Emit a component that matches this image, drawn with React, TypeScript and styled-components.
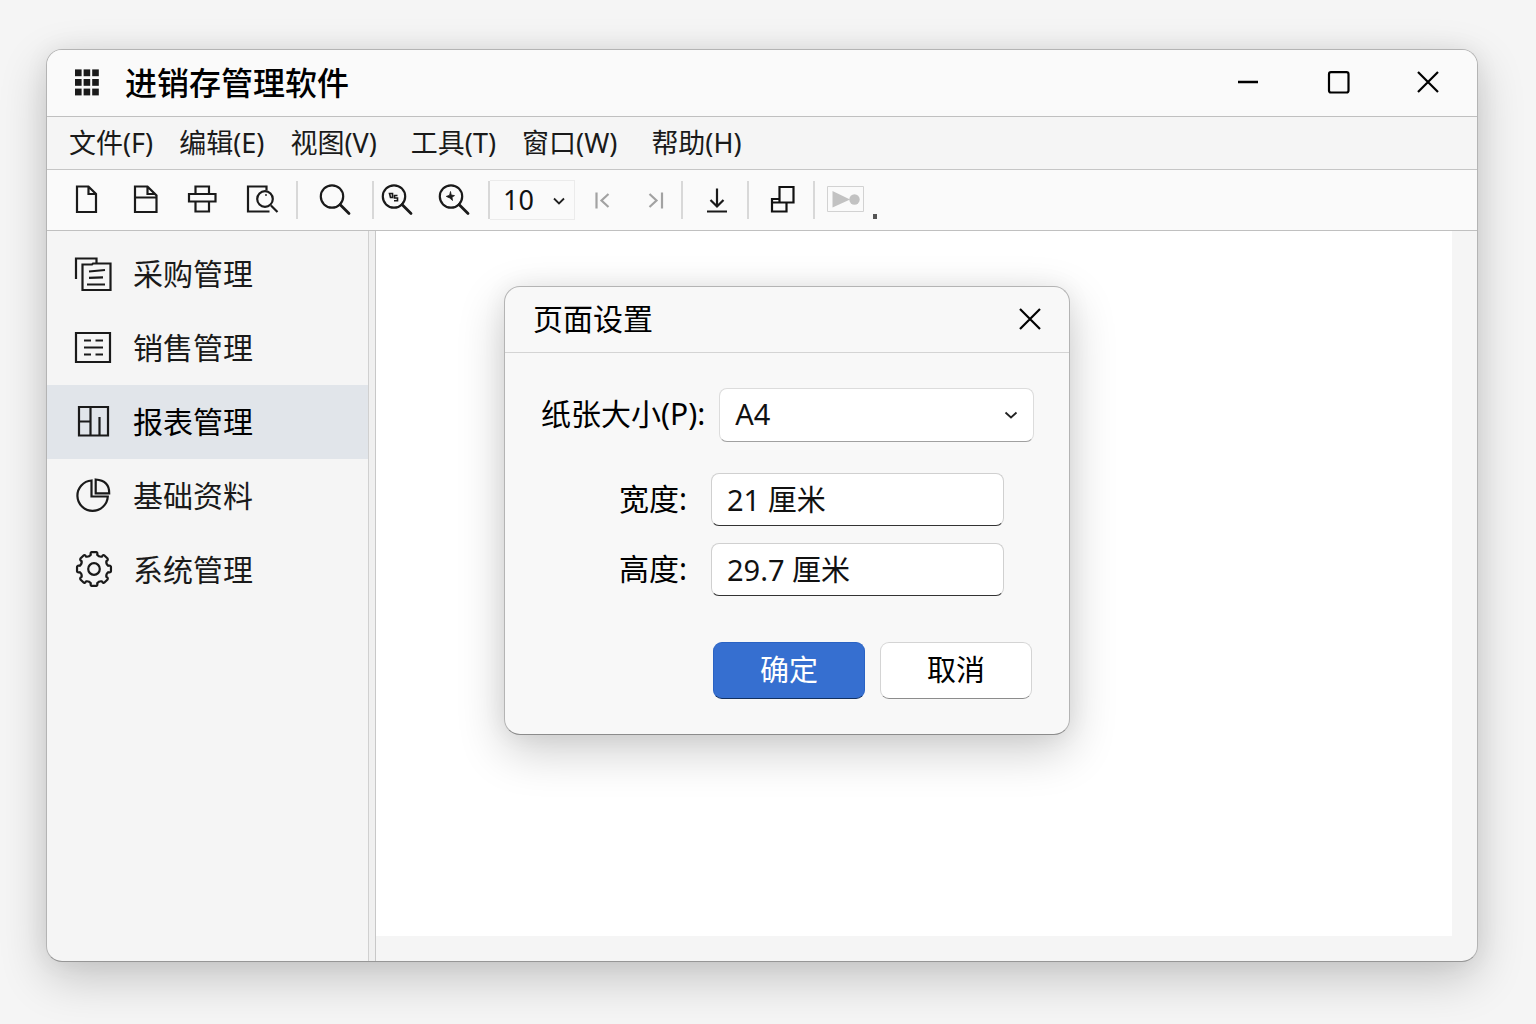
import React, { useState } from "react";
import styled, { createGlobalStyle, css } from "styled-components";

const font = `"Noto Sans", "Noto Sans CJK SC", sans-serif`;

const GlobalStyle = createGlobalStyle`
  *, *::before, *::after { box-sizing: border-box; }
  body { margin: 0; background: #f5f5f5; font-family: ${font}; color: #111; }
  button, input, select { font-family: inherit; color: inherit; margin: 0; }
`;

const Desktop = styled.div`
  min-height: 100vh;
  display: flex;
  padding: 49px 58px 62px 46px;
`;

const Window = styled.main`
  flex: 1;
  min-width: 0;
  display: flex;
  flex-direction: column;
  border: 1px solid #b4b4b4;
  border-bottom-color: #969696;
  border-radius: 16px;
  overflow: hidden;
  background: #f5f5f5;
  box-shadow: 0 16px 48px rgba(0, 0, 0, 0.2), 0 0 24px rgba(0, 0, 0, 0.06);
`;

const TitleBar = styled.header`
  height: 67px;
  display: flex;
  align-items: center;
  padding: 0 24px 0 27px;
  background: #fafafa;
  border-bottom: 1px solid #c0c0c0;
`;

const WindowTitle = styled.h1`
  flex: 1;
  margin: 0 0 0 25px;
  font-size: 32px;
  line-height: 40px;
  font-weight: 500;
  color: #000;
`;

const CaptionButtons = styled.div`
  display: flex;
  gap: 40px;
`;

const PlainButton = styled.button`
  flex: none;
  display: flex;
  align-items: center;
  justify-content: center;
  padding: 0;
  border: 0;
  border-radius: 4px;
  background: transparent;
  &:enabled:hover { background: #ececec; }
`;

const CaptionButton = styled(PlainButton)`
  width: 50px;
  height: 40px;
`;

const MenuBar = styled.nav`
  height: 53px;
  display: flex;
  align-items: center;
  gap: 34px;
  padding: 0 22px;
  background: #f5f5f5;
  border-bottom: 1px solid #c6c6c6;
`;

const MenuGroup = styled.div`
  display: flex;
  gap: 26px;
`;

const MenuButton = styled(PlainButton)`
  font-size: 27px;
  line-height: 36px;
  color: #1a1a1a;
`;

const ToolBar = styled.div`
  height: 61px;
  display: flex;
  align-items: center;
  padding-left: 19px;
  background: #fafafa;
  border-bottom: 1px solid #c0c0c0;
`;

const ToolGroup = styled.div<{ $before?: number; $after?: number; $gap?: number }>`
  display: flex;
  align-items: center;
  gap: ${(p) => p.$gap ?? 0}px;
  padding: 0 ${(p) => p.$after ?? 0}px 0 ${(p) => p.$before ?? 0}px;
`;

const ToolDivider = styled.span`
  flex: none;
  width: 2px;
  height: 38px;
  background: #d8d8d8;
`;

const ToolButton = styled(PlainButton)`
  width: 40px;
  height: 40px;
`;

const ZoomBox = styled.div`
  display: grid;
  align-items: center;
  width: 85px;
  height: 40px;
  border: 1px solid #ebebeb;
  border-left: 0;
  & > * { grid-area: 1 / 1; }
`;

const SelectControl = styled.select`
  appearance: none;
  width: 100%;
  height: 100%;
  border: 0;
  outline: 0;
  background: transparent;
`;

const ZoomSelect = styled(SelectControl)`
  padding: 0 0 2px 13px;
  font-size: 27px;
`;

const SelectChevron = styled.svg<{ $inset: number }>`
  justify-self: end;
  margin-right: ${(p) => p.$inset}px;
  pointer-events: none;
`;

const OverflowMark = styled.span`
  align-self: flex-end;
  width: 4px;
  height: 5px;
  margin: 0 0 11px 8px;
  background: #555;
`;

const Body = styled.div`
  flex: 1;
  display: flex;
`;

const SideBar = styled.aside`
  flex: none;
  width: 322px;
  padding-top: 6px;
  border-right: 1px solid #d0d0d0;
`;

const Splitter = styled.div`
  flex: none;
  width: 7px;
  border-right: 1px solid #c8c8c8;
  background: #f0f0f0;
`;

const SideItem = styled.button<{ $active?: boolean }>`
  display: flex;
  align-items: center;
  gap: 19px;
  width: 100%;
  height: 74px;
  padding: 0 27px;
  border: 0;
  background: ${(p) => (p.$active ? "#e1e5ea" : "transparent")};
  color: ${(p) => (p.$active ? "#000" : "#1a1a1a")};
  font-size: 30px;
  line-height: 40px;
`;

const Workspace = styled.section`
  position: relative;
  flex: 1;
  display: flex;
  padding: 0 25px 25px 0;
`;

const Canvas = styled.div`
  flex: 1;
  background: #fff;
`;

const Dialog = styled.form`
  position: absolute;
  left: 128px;
  top: 55px;
  width: 566px;
  border: 1px solid #b4b4b4;
  border-bottom-color: #8c8c8c;
  border-radius: 16px;
  background: #f8f8f8;
  box-shadow: 0 16px 48px rgba(0, 0, 0, 0.2), 0 0 24px rgba(0, 0, 0, 0.06);
`;

const DialogHeader = styled.div`
  height: 66px;
  display: flex;
  align-items: center;
  justify-content: space-between;
  padding: 0 19px 2px 28px;
  border-bottom: 1px solid #d4d4d4;
`;

const DialogTitle = styled.h2`
  margin: 0;
  font-size: 30px;
  line-height: 40px;
  font-weight: 400;
  color: #000;
`;

const DialogBody = styled.div`
  display: flex;
  flex-direction: column;
  padding: 35px 35px 35px 36px;
`;

const FieldRow = styled.div<{ $measure?: boolean }>`
  display: flex;
  align-items: center;
  gap: 14px;
  ${(p) =>
    p.$measure &&
    css`
      justify-content: flex-end;
      gap: 24px;
      padding-right: 30px;
    `}
`;

const MeasureFields = styled.div`
  display: flex;
  flex-direction: column;
  gap: 17px;
  margin: 31px 0 46px;
`;

const FieldLabel = styled.label`
  flex: none;
  padding-bottom: 2px;
  font-size: 30px;
  line-height: 40px;
  color: #000;
`;

const PaperBox = styled.div`
  flex: 1;
  min-width: 0;
  display: grid;
  align-items: center;
  height: 54px;
  border: 1px solid #dcdcdc;
  border-bottom-color: #a0a0a0;
  border-radius: 8px;
  background: #fff;
  & > * { grid-area: 1 / 1; }
`;

const PaperSelect = styled(SelectControl)`
  padding: 0 15px 4px;
  font-size: 29px;
`;

const MeasureInput = styled.input`
  width: 293px;
  height: 53px;
  padding: 0 15px 4px;
  border: 1px solid #d0d0d0;
  border-bottom-color: #333;
  border-radius: 8px;
  outline: 0;
  background: #fff;
  font-size: 29px;
`;

const Actions = styled.div`
  display: flex;
  justify-content: flex-end;
  gap: 15px;
  padding-right: 2px;
`;

const ActionButton = styled.button<{ $primary?: boolean }>`
  width: 152px;
  height: 57px;
  padding: 0 0 2px;
  border: 1px solid ${(p) => (p.$primary ? "#2a63c4" : "#d4d4d4")};
  border-bottom-color: ${(p) => (p.$primary ? "#12305f" : "#8c8c8c")};
  border-radius: 9px;
  background: ${(p) => (p.$primary ? "#366fd0" : "#fff")};
  font-size: 29px;
  line-height: 40px;
  && { color: ${(p) => (p.$primary ? "#fff" : "#000")}; }
`;

type DrawingProps = { children: React.ReactNode; color?: string; size?: number; weight?: number };

function Drawing({ children, color = "#1a1a1a", size = 40, weight = 2.2 }: DrawingProps) {
  return (
    <svg width={size} height={size} viewBox={`0 0 ${size} ${size}`} fill="none" stroke={color} strokeWidth={weight} aria-hidden="true">
      {children}
    </svg>
  );
}

const Lens = () => (
  <>
    <circle cx="17" cy="16.5" r="11.2" />
    <path d="M25 24.5 34 33.5" strokeWidth="2.8" strokeLinecap="round" />
  </>
);

const gearPath = (() => {
  const points: string[] = [];
  for (let tooth = 0; tooth < 8; tooth++) {
    const middle = (tooth * Math.PI) / 4;
    const at = (offset: number, radius: number) =>
      `${(20 + radius * Math.cos(middle + offset)).toFixed(2)} ${(19 + radius * Math.sin(middle + offset)).toFixed(2)}`;
    points.push(`${tooth ? "L" : "M"}${at(-0.22, 14.6)}Q${at(-0.23, 17)} ${at(-0.13, 17.1)}L${at(0.13, 17.1)}Q${at(0.23, 17)} ${at(0.22, 14.6)}Q${at(0.39, 12.9)} ${at(0.565, 14.6)}`);
  }
  return points.join("") + "Z";
})();

const menuGroups = [
  ["文件(F)", "编辑(E)", "视图(V)"],
  ["工具(T)", "窗口(W)"],
  ["帮助(H)"],
];

const modules = [
  {
    name: "采购管理",
    icon: (
      <>
        <path d="M2 25V4.5H22.5V9.5M8.5 36V10.5H18L19 9.5H36.5V36Z" />
        <path d="M15 17.5 31 16M15 23.8 29 23.3M13 30.5H31" />
      </>
    ),
  },
  {
    name: "销售管理",
    icon: (
      <>
        <path d="M2 5H36V34H2Z" />
        <path d="M10 12.5H17M21.5 12.5H29M10 19.5H29M10 26.5H17M21.5 26.5H29" />
      </>
    ),
  },
  { name: "报表管理", icon: <path d="M5 5H34V33.5H5ZM16.5 5V33.5M5 19.5H16.5M25.5 15V33.5" /> },
  {
    name: "基础资料",
    icon: (
      <>
        <path d="M17.5 4.5A15.2 15.2 0 1 0 33.8 20.5H17.5Z" />
        <path d="M21.7 3.5V17.3H35.2Q35.5 4.5 21.7 3.5Z" />
      </>
    ),
  },
  {
    name: "系统管理",
    icon: (
      <>
        <path d={gearPath} strokeLinejoin="round" />
        <circle cx="20" cy="19" r="5.8" />
      </>
    ),
  },
];

export default function App() {
  const [active, setActive] = useState("报表管理");
  return (
    <>
      <GlobalStyle />
      <Desktop>
        <Window>
          <TitleBar>
            <svg width="26" height="28" viewBox="0 0 26 28" fill="#1a1a1a" aria-hidden="true">
              {[0, 1, 2].flatMap((row) =>
                [0, 1, 2].map((col) => <rect key={`${row}${col}`} x={1 + col * 8.6} y={0.4 + row * 9.6} width="6.6" height="6.8" />)
              )}
            </svg>
            <WindowTitle>进销存管理软件</WindowTitle>
            <CaptionButtons>
              <CaptionButton type="button" aria-label="最小化">
                <Drawing size={24} color="#000"><path d="M2 11H22" strokeWidth="2.4" /></Drawing>
              </CaptionButton>
              <CaptionButton type="button" aria-label="最大化">
                <Drawing size={24} color="#000"><rect x="3" y="1.2" width="19.5" height="20.3" rx="2" /></Drawing>
              </CaptionButton>
              <CaptionButton type="button" aria-label="关闭">
                <Drawing size={24} color="#000"><path d="M2 1 22 21M22 1 2 21" /></Drawing>
              </CaptionButton>
            </CaptionButtons>
          </TitleBar>

          <MenuBar>
            {menuGroups.map((group) => (
              <MenuGroup key={group[0]}>
                {group.map((menu) => <MenuButton type="button" key={menu}>{menu}</MenuButton>)}
              </MenuGroup>
            ))}
          </MenuBar>

          <ToolBar role="toolbar">
            <ToolGroup $gap={18} $after={16}>
              <ToolButton type="button" aria-label="新建">
                <Drawing><path d="M11 6.5H22.5L30 14V32H11ZM22.5 6.5V14H30" /></Drawing>
              </ToolButton>
              <ToolButton type="button" aria-label="打开">
                <Drawing><path d="M11 6.5H23.5L32.5 15.5V32H11ZM23.5 6.5V14H31M11 17.5H32.5" /></Drawing>
              </ToolButton>
              <ToolButton type="button" aria-label="打印">
                <Drawing><path d="M7 14H33.5V21.5H7ZM13.5 14V6.5H27V14M13.5 21.5V31.5H27V21.5" /></Drawing>
              </ToolButton>
              <ToolButton type="button" aria-label="打印预览">
                <Drawing>
                  <path d="M29.5 31.5H8V6.5H26.5V10.5" />
                  <circle cx="25" cy="19" r="7.8" />
                  <path d="M31 25.5 37.5 32" />
                  <circle cx="26" cy="15" r="0.6" strokeWidth="1" />
                </Drawing>
              </ToolButton>
            </ToolGroup>
            <ToolDivider />
            <ToolGroup $before={17} $after={17}>
              <ToolButton type="button" aria-label="查找"><Drawing><Lens /></Drawing></ToolButton>
            </ToolGroup>
            <ToolDivider />
            <ToolGroup $before={3} $after={14} $gap={17}>
              <ToolButton type="button" aria-label="缩放">
                <Drawing>
                  <Lens />
                  <path d="M12.5 13.5H15.5V17.5H13.5ZM20.5 15.5H17.5V18H20.5V20.8H17" strokeWidth="1.6" />
                </Drawing>
              </ToolButton>
              <ToolButton type="button" aria-label="放大">
                <Drawing>
                  <Lens />
                  <path d="M16.5 11.5 17.2 15 20.5 15.6 18 17.2 18.5 20.5 15.8 18 12.3 16.4 15.6 15.2Z" fill="#1a1a1a" strokeWidth="0.8" />
                </Drawing>
              </ToolButton>
            </ToolGroup>
            <ToolDivider />
            <ZoomBox>
              <ZoomSelect aria-label="显示比例" defaultValue="10">
                <option>10</option>
                <option>20</option>
              </ZoomSelect>
              <SelectChevron $inset={8} width="14" height="10" viewBox="0 0 14 10" fill="none" stroke="#222" strokeWidth="1.8" aria-hidden="true">
                <path d="M2 2.5 7 7.5 12 2.5" />
              </SelectChevron>
            </ZoomBox>
            <ToolGroup $before={7} $after={4} $gap={15}>
              <ToolButton type="button" disabled aria-label="首页">
                <Drawing color="#a2a2a2"><path d="M14.5 12.5V28.5M26.5 14 19.5 20.5 26.5 27" /></Drawing>
              </ToolButton>
              <ToolButton type="button" disabled aria-label="末页">
                <Drawing color="#a2a2a2"><path d="M25 12.5V28.5M12.5 14 19.5 20.5 12.5 27" /></Drawing>
              </ToolButton>
            </ToolGroup>
            <ToolDivider />
            <ToolGroup $before={14} $after={10}>
              <ToolButton type="button" aria-label="导出">
                <Drawing><path d="M20 8.5V26M13.5 20 20 26.5 26.5 20M10 31.5H30" /></Drawing>
              </ToolButton>
            </ToolGroup>
            <ToolDivider />
            <ToolGroup $before={14} $after={10}>
              <ToolButton type="button" aria-label="层叠窗口">
                <Drawing color="#111"><path d="M16.5 7H30.5V22.5H16.5ZM16.5 19H9V31.5H23.5V22.5M9 22.5H16.5" /></Drawing>
              </ToolButton>
            </ToolGroup>
            <ToolDivider />
            <ToolGroup $before={10}>
              <ToolButton type="button" disabled aria-label="播放">
                <Drawing color="#d2d2d2" weight={1}>
                  <path d="M2.5 6.5H38.5V31.5H2.5Z" />
                  <path d="M7.5 11 25 19.5 7.5 27.5Z" fill="#c2c2c2" stroke="none" />
                  <circle cx="29.5" cy="19.5" r="5.2" fill="#c2c2c2" stroke="none" />
                </Drawing>
              </ToolButton>
            </ToolGroup>
            <OverflowMark />
          </ToolBar>

          <Body>
            <SideBar>
              {modules.map(({ name, icon }) => (
                <SideItem type="button" key={name} $active={name === active} onClick={() => setActive(name)}>
                  <Drawing>{icon}</Drawing>
                  {name}
                </SideItem>
              ))}
            </SideBar>
            <Splitter />
            <Workspace>
              <Canvas />
              <Dialog role="dialog" aria-labelledby="page-setup" onSubmit={(event) => event.preventDefault()}>
                <DialogHeader>
                  <DialogTitle id="page-setup">页面设置</DialogTitle>
                  <ToolButton type="button" aria-label="关闭">
                    <Drawing size={24} color="#000"><path d="M2 2 22 22M22 2 2 22" /></Drawing>
                  </ToolButton>
                </DialogHeader>
                <DialogBody>
                  <FieldRow>
                    <FieldLabel htmlFor="paper">纸张大小(P):</FieldLabel>
                    <PaperBox>
                      <PaperSelect id="paper" defaultValue="A4">
                        <option>A4</option>
                        <option>A5</option>
                      </PaperSelect>
                      <SelectChevron $inset={15} width="14" height="10" viewBox="0 0 14 10" fill="none" stroke="#222" strokeWidth="1.8" aria-hidden="true">
                        <path d="M1.5 2.5 7 7.5 12.5 2.5" />
                      </SelectChevron>
                    </PaperBox>
                  </FieldRow>
                  <MeasureFields>
                    <FieldRow $measure>
                      <FieldLabel htmlFor="width">宽度:</FieldLabel>
                      <MeasureInput id="width" defaultValue="21 厘米" />
                    </FieldRow>
                    <FieldRow $measure>
                      <FieldLabel htmlFor="height">高度:</FieldLabel>
                      <MeasureInput id="height" defaultValue="29.7 厘米" />
                    </FieldRow>
                  </MeasureFields>
                  <Actions>
                    <ActionButton type="submit" $primary>确定</ActionButton>
                    <ActionButton type="button">取消</ActionButton>
                  </Actions>
                </DialogBody>
              </Dialog>
            </Workspace>
          </Body>
        </Window>
      </Desktop>
    </>
  );
}
